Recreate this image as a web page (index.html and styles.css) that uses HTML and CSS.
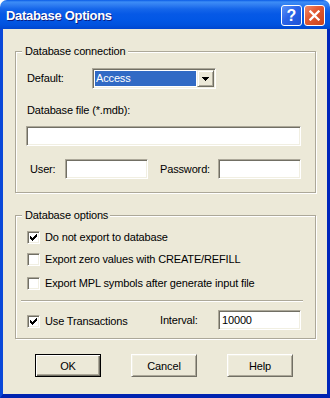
FILE: index.html
```html
<!DOCTYPE html>
<html lang="en">
<head>
    <meta charset="UTF-8">
    <title>Database Options</title>
    <link rel="stylesheet" href="styles.css">
</head>
<body>
    <div class="window">
        <div class="titlebar">
            <span class="title">Database Options</span>
            <button class="cap-btn cap-help"><span>?</span></button>
            <button class="cap-btn cap-close">
                <svg width="11" height="11" viewBox="0 0 11 11">
                    <path d="M1.5 1.5 L9.5 9.5 M9.5 1.5 L1.5 9.5" stroke="#fff" stroke-width="2.3" stroke-linecap="square"/>
                </svg>
            </button>
        </div>

        <div class="client">
            <div class="group group-connection">
                <div class="group-title">Database connection</div>

                <div class="row-default">
                    <span class="label">Default:</span>
                    <div class="combo">
                        <span class="combo-value">Access</span>
                        <span class="combo-btn">
                            <svg width="7" height="4" viewBox="0 0 7 4" shape-rendering="crispEdges">
                                <path d="M0 0h7v1h-7z M1 1h5v1h-5z M2 2h3v1h-3z M3 3h1v1h-1z" fill="#000"/>
                            </svg>
                        </span>
                    </div>
                </div>

                <div class="label label-file">Database file (*.mdb):</div>
                <input type="text" class="textbox textbox-wide">

                <div class="row-pair row-login">
                    <span class="label label-user">User:</span>
                    <input type="text" class="textbox textbox-small">
                    <span class="label label-right">Password:</span>
                    <input type="password" class="textbox textbox-small">
                </div>
            </div>

            <div class="group group-options">
                <div class="group-title">Database options</div>

                <label class="check check-first">
                    <span class="checkbox checked">
                        <svg width="7" height="7" viewBox="0 0 7 7" shape-rendering="crispEdges">
                            <path d="M0 2h1v3h-1z M1 3h1v3h-1z M2 4h1v3h-1z M3 3h1v3h-1z M4 2h1v3h-1z M5 1h1v3h-1z M6 0h1v3h-1z" fill="#000"/>
                        </svg>
                    </span>
                    Do not export to database
                </label>
                <label class="check check-second">
                    <span class="checkbox"></span>
                    Export zero values with CREATE/REFILL
                </label>
                <label class="check check-third">
                    <span class="checkbox"></span>
                    Export MPL symbols after generate input file
                </label>

                <div class="separator"></div>

                <div class="row-pair row-interval">
                    <label class="check check-inline">
                        <span class="checkbox checked">
                            <svg width="7" height="7" viewBox="0 0 7 7" shape-rendering="crispEdges">
                                <path d="M0 2h1v3h-1z M1 3h1v3h-1z M2 4h1v3h-1z M3 3h1v3h-1z M4 2h1v3h-1z M5 1h1v3h-1z M6 0h1v3h-1z" fill="#000"/>
                            </svg>
                        </span>
                        Use Transactions
                    </label>
                    <span class="label label-right">Interval:</span>
                    <input type="text" class="textbox textbox-small" value="10000">
                </div>
            </div>

            <div class="buttons">
                <button class="btn btn-default">OK</button>
                <button class="btn">Cancel</button>
                <button class="btn">Help</button>
            </div>
        </div>
    </div>
</body>
</html>
```

FILE: styles.css
```css
:root {
    --face: #ECE9D8;
    --light: #F1EFE2;
    --shadow: #ACA899;
    --dark-shadow: #716F64;
    --highlight: #FFFFFF;
    --selection: #316AC5;
}

* {
    margin: 0;
    padding: 0;
    box-sizing: border-box;
}

body {
    width: 330px;
    height: 398px;
    overflow: hidden;
    background: #fff;
    font-family: 'Liberation Sans', Arial, sans-serif;
    font-size: 11px;
    line-height: 13px;
    letter-spacing: -0.15px;
    color: #000;
}

.window {
    width: 330px;
    height: 398px;
    display: flex;
    flex-direction: column;
}

/* title bar */
.titlebar {
    height: 29px;
    flex: none;
    display: flex;
    align-items: center;
    padding: 2px 5px 0 6px;
    border-radius: 7px 7px 0 0;
    background: linear-gradient(#0A5BE6 0, #3D8DF6 2px, #2F7DF1 5px, #1566EA 9px, #0659E6 14px, #0257E5 20px, #0052DE 25px, #0046CF 29px);
}

.title {
    flex: 1;
    color: #fff;
    font-weight: bold;
    font-size: 13px;
    line-height: 16px;
    letter-spacing: -0.3px;
    text-shadow: 1px 1px #0A1E82;
}

.cap-btn {
    width: 21px;
    height: 21px;
    border: 1px solid #fff;
    border-radius: 3px;
    display: flex;
    align-items: center;
    justify-content: center;
    color: #fff;
}

.cap-help {
    margin-right: 2px;
    background: linear-gradient(135deg, #5C93F8 0%, #2A63E8 45%, #1E52D6 100%);
    font-family: 'Liberation Sans', Arial, sans-serif;
    font-weight: bold;
    font-size: 16px;
    line-height: 16px;
}

.cap-close {
    background: linear-gradient(135deg, #F08A6C 0%, #E25A33 40%, #C8421C 100%);
}

/* client area */
.client {
    flex: 1;
    background: var(--face);
    border-left: 3px solid #0A48D9;
    border-right: 3px solid #0026BA;
    border-bottom: 4px solid #0023B0;
}

.group {
    margin: 22px 11px 0 12px;
    padding: 0 14px 0 10px;
    border: 1px solid var(--shadow);
    box-shadow: inset 1px 1px var(--highlight), 1px 1px var(--highlight);
}

.group-connection {
    padding-bottom: 13px;
}

.group-options {
    padding-bottom: 8px;
}

.group-title {
    width: fit-content;
    margin: -7px 0 0 -4px;
    padding: 0 2px 0 3px;
    background: var(--face);
}

.label {
    white-space: nowrap;
}

.row-default {
    display: flex;
    align-items: center;
    margin-top: 10px;
}

.row-default .label {
    width: 66px;
    padding-left: 1px;
}

.combo {
    width: 124px;
    height: 21px;
    display: flex;
    padding: 1px;
    background: #fff;
    border: 1px solid;
    border-color: var(--shadow) var(--highlight) var(--highlight) var(--shadow);
    box-shadow: inset 1px 1px var(--dark-shadow), inset -1px -1px var(--light);
}

.combo-value {
    flex: 1;
    margin: 1px;
    padding-left: 1px;
    background: var(--selection);
    color: #fff;
    line-height: 15px;
}

.combo-btn {
    width: 17px;
    display: flex;
    align-items: center;
    justify-content: center;
    background: var(--face);
    border: 1px solid;
    border-color: var(--light) var(--dark-shadow) var(--dark-shadow) var(--light);
    box-shadow: inset 1px 1px var(--highlight), inset -1px -1px var(--shadow);
}

.label-file {
    margin-top: 15px;
    padding-left: 1px;
}

.textbox {
    display: block;
    height: 20px;
    padding: 0 3px;
    background: #fff;
    border: 1px solid;
    border-color: var(--shadow) var(--highlight) var(--highlight) var(--shadow);
    box-shadow: inset 1px 1px var(--dark-shadow), inset -1px -1px var(--light);
    font-family: inherit;
    font-size: 11px;
    letter-spacing: inherit;
    color: #000;
    outline: none;
}

.textbox-wide {
    width: 275px;
    margin-top: 9px;
}

.textbox-small {
    width: 83px;
}

.row-pair {
    display: flex;
    align-items: center;
}

.row-login {
    margin-top: 13px;
}

.label-user {
    width: 39px;
    padding-left: 4px;
}

.label-right {
    width: 70px;
    padding-left: 12px;
}

/* check boxes */
.check {
    display: flex;
    align-items: center;
    gap: 5px;
    padding-left: 1px;
    height: 13px;
    white-space: nowrap;
}

.check-first {
    margin-top: 9px;
}

.check-second {
    margin-top: 9px;
}

.check-third {
    margin-top: 11px;
}

.checkbox {
    width: 13px;
    height: 13px;
    flex: none;
    padding: 2px;
    background: #fff;
    border: 1px solid;
    border-color: var(--shadow) var(--highlight) var(--highlight) var(--shadow);
    box-shadow: inset 1px 1px var(--dark-shadow), inset -1px -1px var(--light);
}

.checkbox svg {
    display: block;
}

.separator {
    margin: 10px 0 0 -5px;
    width: 282px;
    height: 2px;
    border-top: 1px solid var(--shadow);
    border-bottom: 1px solid var(--highlight);
}

.row-interval {
    margin-top: 8px;
}

.check-inline {
    width: 122px;
    margin-top: 3px;
}

/* dialog buttons */
.buttons {
    display: flex;
    gap: 30px;
    margin: 15px 0 0 32px;
}

.btn {
    width: 66px;
    height: 23px;
    background: var(--face);
    border: 1px solid;
    border-color: var(--highlight) var(--dark-shadow) var(--dark-shadow) var(--highlight);
    box-shadow: inset 1px 1px var(--light), inset -1px -1px var(--shadow);
    font-family: inherit;
    font-size: 11px;
    letter-spacing: inherit;
    color: #000;
}

.btn-default {
    border-color: #000;
    box-shadow: inset 1px 1px var(--highlight), inset -1px -1px var(--dark-shadow), inset -2px -2px var(--shadow);
}
```
